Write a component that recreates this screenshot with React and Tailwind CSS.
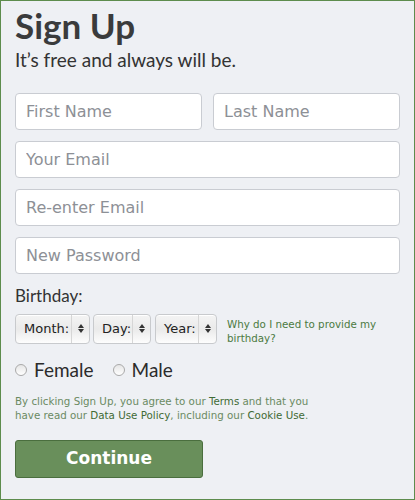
import React from "react";

const INPUT =
  "w-full h-[37px] rounded-[4px] border border-[#c9ccd2] bg-white px-[10px] text-[16px] text-[#333] placeholder-[#8d9096] outline-none";

function Select({ label, width }) {
  return (
    <div
      className={`${width} h-[30px] flex items-stretch rounded-[4px] border border-[#c8cacd] bg-gradient-to-b from-[#f4f4f4] via-[#eaeaea] to-[#fdfdfd] shadow-[inset_0_1px_0_#fff]`}
    >
      <span className="flex-1 flex items-center pl-[8px] text-[13px] text-[#222]">{label}</span>
      <span className="w-[18px] border-l border-[#d6d6d6] flex flex-col items-center justify-center gap-[1px]">
        <svg width="6" height="4" viewBox="0 0 6 4"><path d="M3 0L6 4H0z" fill="#333" /></svg>
        <svg width="6" height="4" viewBox="0 0 6 4"><path d="M0 0H6L3 4z" fill="#333" /></svg>
      </span>
    </div>
  );
}

function Radio({ label }) {
  return (
    <label className="flex items-center gap-[7px]">
      <span className="w-[12px] h-[12px] rounded-full border border-[#a9a9a9] bg-gradient-to-b from-[#e6e6e6] to-white" />
      <span className="text-[19px] text-[#2b2b2b]" style={{ fontFamily: "Lato, sans-serif" }}>{label}</span>
    </label>
  );
}

export default function App() {
  return (
    <div className="w-[415px] h-[500px] border border-[#5d8c4d] bg-[#eef0f4] px-[14px] pt-[2px] box-border" style={{ fontFamily: "'DejaVu Sans', sans-serif" }}>
      <h1 className="text-[35px] font-bold leading-[44px] text-[#3a3b3c]" style={{ fontFamily: "Lato, sans-serif" }}>
        Sign Up
      </h1>
      <p className="mt-[1px] text-[19px] leading-[24px] text-[#333]" style={{ fontFamily: "Lato, sans-serif" }}>
        It’s free and always will be.
      </p>

      <div className="mt-[21px] flex flex-col gap-[11px]">
        <div className="flex gap-[11px]">
          <input className={INPUT} placeholder="First Name" />
          <input className={INPUT} placeholder="Last Name" />
        </div>
        <input className={INPUT} placeholder="Your Email" />
        <input className={INPUT} placeholder="Re-enter Email" />
        <input className={INPUT} placeholder="New Password" />
      </div>

      <p className="mt-[11px] text-[17px] leading-[22px] text-[#333]" style={{ fontFamily: "Lato, sans-serif" }}>
        Birthday:
      </p>
      <div className="mt-[5px] flex items-center">
        <Select label="Month:" width="w-[75px]" />
        <div className="w-[3px]" />
        <Select label="Day:" width="w-[58px]" />
        <div className="w-[4px]" />
        <Select label="Year:" width="w-[62px]" />
        <a className="ml-[10px] mt-[5px] text-[10.3px] leading-[14px] text-[#4b7a3f]">
          Why do I need to provide my<br />birthday?
        </a>
      </div>

      <div className="mt-[11px] flex items-center gap-[19px]">
        <Radio label="Female" />
        <Radio label="Male" />
      </div>

      <p className="mt-[9px] text-[10.3px] leading-[14px] text-[#6a8a62]">
        By clicking Sign Up, you agree to our <span className="text-[#3f6b34]">Terms</span> and that you
        <br />
        have read our <span className="text-[#3f6b34]">Data Use Policy</span>, including our{" "}
        <span className="text-[#3f6b34]">Cookie Use</span>.
      </p>

      <button className="mt-[18px] w-[188px] h-[38px] rounded-[3px] border border-[#4a6e3e] bg-[#698f5b] text-[17px] font-bold text-white">
        Continue
      </button>
    </div>
  );
}
